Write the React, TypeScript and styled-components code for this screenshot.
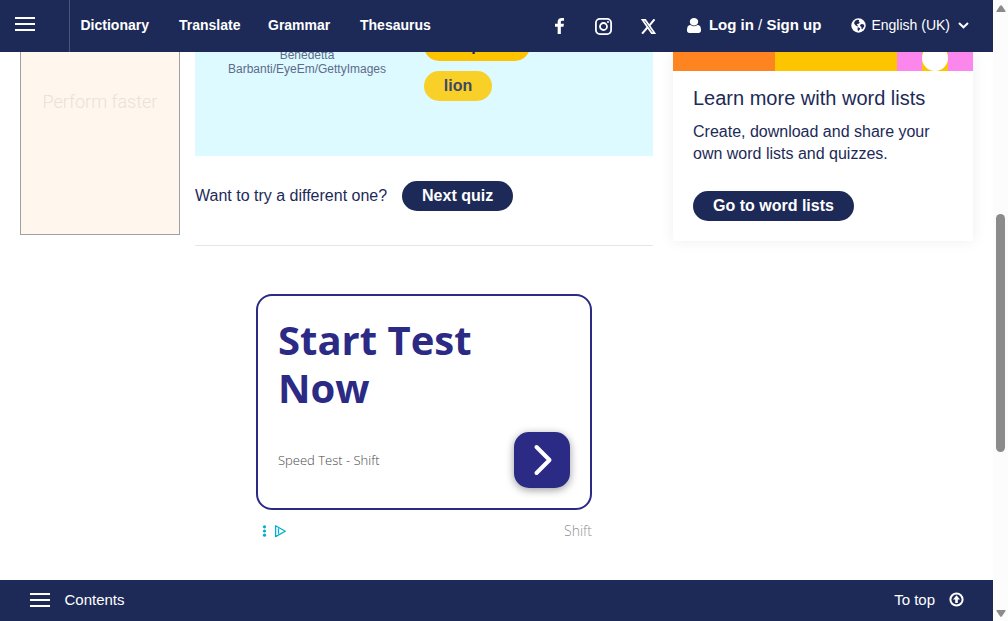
import React from "react";
import styled, { createGlobalStyle } from "styled-components";

const navy = "#1d2a57";
const indigo = "#2b2a84";

const GlobalStyle = createGlobalStyle`
  * { box-sizing: border-box; }
  body { margin: 0; background: #fff; font-family: "Liberation Sans", Arial, sans-serif; color: ${navy}; }
  h2, p { margin: 0; font-weight: 400; }
  button { font: inherit; border: 0; padding: 0; background: none; color: inherit; }
  svg { display: block; flex: none; }
`;

const Window = styled.div`
  display: grid;
  grid-template-columns: 993px 15px;
  width: 1008px;
  height: 621px;
  overflow: hidden;
`;

const Page = styled.div`
  display: grid;
  grid-template-rows: 52px 528px 41px;
  min-width: 0;
`;

const Header = styled.header`
  display: flex;
  align-items: center;
  background: ${navy};
  color: #fff;
  font-size: 15px;
  line-height: 50px;
  padding-right: 24px;
`;

const MenuCell = styled.button`
  display: flex;
  align-items: center;
  width: 70px;
  height: 52px;
  padding: 0 0 4px 15px;
  border-right: 1px solid #4a5479;
`;

const Burger = styled.span`
  display: flex;
  flex-direction: column;
  justify-content: space-between;
  width: 20px;
  height: 14px;
  i { height: 2px; background: #fff; }
`;

const Nav = styled.nav`
  display: flex;
  margin-left: 10.5px;
  height: 52px;
`;

const NavLink = styled.a<{ $w: number }>`
  width: ${(p) => p.$w}px;
  font-weight: 700;
  font-size: 14px;
  white-space: nowrap;
`;

const Socials = styled.div`
  display: flex;
  align-items: center;
  margin-left: auto;
  height: 52px;
`;

const SocialIcon = styled.a<{ $w: number }>`
  display: flex;
  justify-content: center;
  width: ${(p) => p.$w}px;
`;

const Account = styled.div`
  display: flex;
  align-items: center;
  height: 52px;
  padding-bottom: 2px;
  margin-left: 17px;
  white-space: pre;
  svg { margin-right: 8px; }
`;

const Language = styled(Account)`
  font-size: 14px;
  margin-left: 30px;
  svg { margin-right: 5px; }
  svg:last-child { margin: 0 0 0 8px; }
`;

const Main = styled.main`
  display: grid;
  grid-template-columns: 160px 458px 300px;
  column-gap: 15px;
  padding-left: 20px;
  overflow: hidden;
  align-items: start;
`;

const SideAd = styled.aside`
  height: 183px;
  border: 1px solid #a0a0a0;
  border-top: 0;
  background: #fff6ed;
  padding-top: 38px;
  text-align: center;
  font: 300 18px/24px Roboto, sans-serif;
  color: #ebe1d9;
`;

const Quiz = styled.section`
  display: grid;
  grid-template-columns: 224px 1fr;
  column-gap: 5px;
  height: 104px;
  overflow: hidden;
  background: #dcfaff;
`;

const Credit = styled.p`
  margin-top: -4px;
  text-align: center;
  font-size: 12px;
  line-height: 14px;
  color: #606a8b;
`;

const Answers = styled.div`
  display: flex;
  flex-direction: column;
  align-items: flex-start;
  gap: 10px;
  margin-top: -21px;
`;

const Pill = styled.button<{ $tone: "navy" | "yellow" | "faded"; $w: number }>`
  flex: none;
  width: ${(p) => p.$w}px;
  height: 30px;
  border-radius: 15px;
  font-size: 16px;
  font-weight: 700;
  line-height: 29px;
  padding-bottom: 1px;
  white-space: nowrap;
  background: ${(p) => ({ navy, yellow: "#fec400", faded: "#f8d027" })[p.$tone]};
  color: ${(p) => ({ navy: "#fff", yellow: navy, faded: "#3d4868" })[p.$tone]};
`;

const NextRow = styled.div`
  display: flex;
  align-items: center;
  gap: 15px;
  height: 90px;
  padding-bottom: 10px;
  border-bottom: 1px solid #e4e4e6;
  font-size: 16px;
`;

const AdUnit = styled.div`
  width: 336px;
  margin: 48px 0 0 61px;
`;

const AdCard = styled.div`
  display: flex;
  flex-direction: column;
  justify-content: space-between;
  height: 216px;
  padding: 20px;
  border: 2px solid ${indigo};
  border-radius: 16px;
`;

const AdTitle = styled.h2`
  width: 230px;
  font: 700 40px/48px "Open Sans", sans-serif;
  color: ${indigo};
`;

const AdBottom = styled.div`
  display: flex;
  align-items: center;
  justify-content: space-between;
  font: 300 13px/18px "Open Sans", sans-serif;
  color: #484848;
`;

const Arrow = styled.button`
  display: grid;
  place-items: center;
  width: 56px;
  height: 56px;
  padding-left: 2px;
  border-radius: 15px;
  background: ${indigo};
  box-shadow: 0 2px 8px rgba(0, 0, 0, 0.4);
`;

const AdFooter = styled.div`
  display: flex;
  align-items: center;
  justify-content: space-between;
  margin-top: 11px;
  padding-left: 6px;
  font: 300 14px/20px "Open Sans", sans-serif;
  color: #929292;
`;

const WordLists = styled.section`
  margin-left: 5px;
  width: 300px;
  height: 189px;
  background: #fff;
  box-shadow: 0 0 14px rgba(0, 0, 0, 0.07);
`;

const Banner = styled.div`
  display: grid;
  grid-template-columns: 102px 122px 25px 26px 25px;
  height: 19px;
  overflow: hidden;
`;

const Block = styled.span<{ $color: string }>`
  background: ${(p) => p.$color};
`;

const Dot = styled.span`
  width: 26px;
  height: 26px;
  margin-top: -7px;
  border-radius: 50%;
  background: #fff;
`;

const DotBlock = styled(Block)`
  display: flex;
`;

const ListBody = styled.div`
  padding: 14px 20px;
  h2 { font-size: 20px; line-height: 26px; }
  p { margin: 10px 0 26px; font-size: 16px; line-height: 22px; }
`;

const Footer = styled.footer`
  display: flex;
  align-items: center;
  justify-content: space-between;
  padding: 0 29px 0 30px;
  background: ${navy};
  color: #fff;
  font-size: 15px;
`;

const FooterItem = styled.div<{ $gap: number }>`
  display: flex;
  align-items: center;
  gap: ${(p) => p.$gap}px;
  padding-bottom: 2px;
`;

const Scrollbar = styled.div`
  display: flex;
  flex-direction: column;
  align-items: center;
  background: #fcfcfc;
  padding: 5px 0 4px 0;
`;

const Thumb = styled.div`
  width: 9px;
  height: 238px;
  margin: 202px 0 auto 0;
  border-radius: 5px;
  background: #8b8b8b;
`;

const Lines = () => (
  <Burger>
    <i />
    <i />
    <i />
  </Burger>
);

const FacebookIcon = () => (
  <svg width="9" height="16" viewBox="479 0 864 1664" preserveAspectRatio="none" fill="#fff">
    <path d="M1343 12v264h-157q-86 0-116 36t-30 108v189h293l-39 296h-254v759h-306v-759h-255v-296h255v-218q0-186 104-288.500t277-102.500q147 0 228 12z" />
  </svg>
);

const InstagramIcon = () => (
  <svg width="17" height="17" viewBox="0 0 17 17" fill="none" stroke="#fff" strokeWidth="1.800">
    <rect x="0.900" y="0.900" width="15.200" height="15.200" rx="4" />
    <circle cx="8.500" cy="8.500" r="3.500" />
    <circle cx="13" cy="4" r="1" fill="#fff" stroke="none" />
  </svg>
);

const XIcon = () => (
  <svg width="15" height="15" viewBox="0 0 15 15" fill="none" stroke="#fff">
    <path d="M1.500.9h2.800L13.500 14.100h-2.800z" strokeWidth="1.700" />
    <path d="M13.500.3L8.500 6.300M6.400 8.500L1.100 14.700" strokeWidth="2" />
  </svg>
);

const UserIcon = () => (
  <svg width="14" height="15" viewBox="256 128 1280 1536" preserveAspectRatio="none" fill="#fff">
    <path d="M1536 1399q0 109-62.500 187t-150.500 78h-854q-88 0-150.500-78t-62.500-187q0-85 8.500-160.500t31.500-152 58.500-131 94-89 134.500-34.500q131 128 313 128t313-128q76 0 134.500 34.500t94 89 58.500 131 31.500 152 8.500 160.500zm-256-887q0 159-112.500 271.500t-271.500 112.500-271.500-112.500-112.500-271.500 112.500-271.500 271.500-112.500 271.500 112.500 112.500 271.500z" />
  </svg>
);

const GlobeIcon = () => (
  <svg width="15" height="15" viewBox="0 0 15 15">
    <circle cx="7.500" cy="7.500" r="7.200" fill="#fff" />
    <path
      d="M4.200 2.700l2-.9 2 .3-.5 1.300 1.200 1-1.300 1.300-1.300.3-.5 1 1.500.8-.6.7-2-1-1.500-1.800.2-1.700zM9.200 6.800l1.700-.9 1.800.6.600 1.500-1 1.700-1 1.500-.9-.6v-1.700l-1.300-.8zM6.800 9.200l1.900.8.500 1-1.200 1.200-.9 1.100-.6-2z"
      fill={navy}
    />
  </svg>
);

const ChevronDown = () => (
  <svg width="11" height="7" viewBox="0 0 11 7" fill="none" stroke="#fff" strokeWidth="2">
    <path d="M1 1l4.500 4.300L10 1" />
  </svg>
);

const TopIcon = () => (
  <svg width="15" height="15" viewBox="0 0 15 15" fill="none" stroke="#fff" strokeWidth="2">
    <circle cx="7.500" cy="7.500" r="6.100" />
    <path d="M7.500 3.300L11 7.400H8.800V11H6.200V7.400H4z" fill="#fff" stroke="none" />
  </svg>
);

const AdMarks = () => (
  <svg width="26" height="14" viewBox="0 0 26 14" fill="none" stroke="#00aecd" strokeWidth="1.300">
    <g fill="#00aecd" stroke="none">
      <circle cx="2.500" cy="2.800" r="1.600" />
      <circle cx="2.500" cy="7" r="1.600" />
      <circle cx="2.500" cy="11.200" r="1.600" />
    </g>
    <path d="M16.500 4.500v5.300M13.600 1.800v10.800L23.300 7.200z" strokeLinejoin="round" />
  </svg>
);

const Triangle = ({ down = false }: { down?: boolean }) => (
  <svg width="10" height="7" viewBox="0 0 10 7" fill="#8b8b8b">
    <path d={down ? "M1 0h8q1 0 .5 1L6 6.300q-1 1-2 0L.5 1Q0 0 1 0z" : "M1 7h8q1 0 .5-1L6 .7q-1-1-2 0L.5 6Q0 7 1 7z"} />
  </svg>
);

export default function App() {
  return (
    <>
      <GlobalStyle />
      <Window>
        <Page>
          <Header>
            <MenuCell aria-label="Menu"><Lines /></MenuCell>
            <Nav>
              <NavLink $w={98.5}>Dictionary</NavLink>
              <NavLink $w={89}>Translate</NavLink>
              <NavLink $w={92}>Grammar</NavLink>
              <NavLink $w={72}>Thesaurus</NavLink>
            </Nav>
            <Socials>
              <SocialIcon $w={42}><FacebookIcon /></SocialIcon>
              <SocialIcon $w={46}><InstagramIcon /></SocialIcon>
              <SocialIcon $w={43}><XIcon /></SocialIcon>
            </Socials>
            <Account>
              <UserIcon />
              <b>Log in</b> / <b>Sign up</b>
            </Account>
            <Language>
              <GlobeIcon />
              English (UK)
              <ChevronDown />
            </Language>
          </Header>
          <Main>
            <SideAd>Perform faster</SideAd>
            <div>
              <Quiz>
                <Credit>Benedetta<br />Barbanti/EyeEm/GettyImages</Credit>
                <Answers>
                  <Pill $tone="yellow" $w={106}>leopard</Pill>
                  <Pill $tone="faded" $w={68}>lion</Pill>
                </Answers>
              </Quiz>
              <NextRow>
                Want to try a different one?
                <Pill $tone="navy" $w={111}>Next quiz</Pill>
              </NextRow>
              <AdUnit>
                <AdCard>
                  <AdTitle>Start Test Now</AdTitle>
                  <AdBottom>
                    Speed Test - Shift
                    <Arrow aria-label="Open">
                      <svg width="20" height="32" viewBox="0 0 20 32" fill="none" stroke="#fff" strokeWidth="4" strokeLinecap="round" strokeLinejoin="round">
                        <path d="M3.500 3L16.500 16 3.500 29" />
                      </svg>
                    </Arrow>
                  </AdBottom>
                </AdCard>
                <AdFooter>
                  <AdMarks />
                  Shift
                </AdFooter>
              </AdUnit>
            </div>
            <WordLists>
              <Banner>
                <Block $color="#fd8421" />
                <Block $color="#fcc500" />
                <Block $color="#fb86ec" />
                <DotBlock $color="#fcc500"><Dot /></DotBlock>
                <Block $color="#fb86ec" />
              </Banner>
              <ListBody>
                <h2>Learn more with word lists</h2>
                <p>Create, download and share your own word lists and quizzes.</p>
                <Pill $tone="navy" $w={161}>Go to word lists</Pill>
              </ListBody>
            </WordLists>
          </Main>
          <Footer>
            <FooterItem $gap={14.5}><Lines />Contents</FooterItem>
            <FooterItem $gap={14}>To top<TopIcon /></FooterItem>
          </Footer>
        </Page>
        <Scrollbar>
          <Triangle />
          <Thumb />
          <Triangle down />
        </Scrollbar>
      </Window>
    </>
  );
}
